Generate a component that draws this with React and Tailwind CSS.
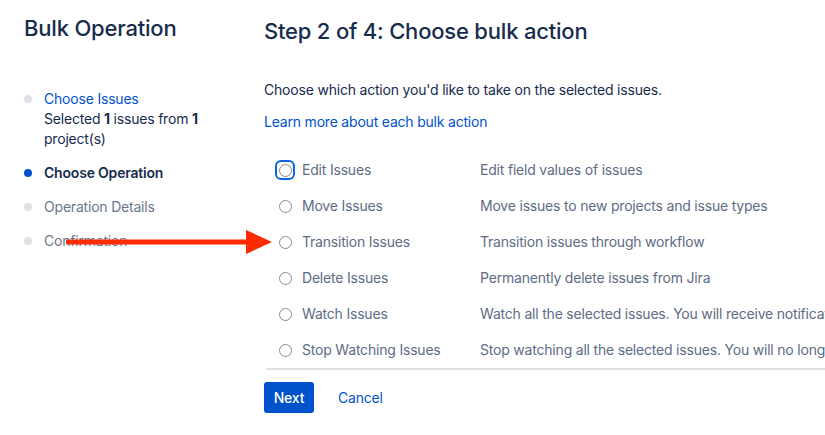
import React from 'react';

const steps = [
  { name: 'Choose Issues', state: 'done' },
  { name: 'Choose Operation', state: 'active' },
  { name: 'Operation Details', state: 'todo' },
  { name: 'Confirmation', state: 'todo' },
];

const ops = [
  ['Edit Issues', 'Edit field values of issues'],
  ['Move Issues', 'Move issues to new projects and issue types'],
  ['Transition Issues', 'Transition issues through workflow'],
  ['Delete Issues', 'Permanently delete issues from Jira'],
  ['Watch Issues', 'Watch all the selected issues. You will receive notifications when any of them are updated'],
  ['Stop Watching Issues', 'Stop watching all the selected issues. You will no longer receive notifications'],
];

const Radio = ({ focused }) => (
  <span
    className={
      'flex items-center justify-center w-[20px] h-[20px] rounded-[6px] ' +
      (focused ? 'border-2 border-[#0c66e4]' : 'border-2 border-transparent')
    }
  >
    <span className="block w-[13px] h-[13px] rounded-full border border-[#8a8a8a] bg-white" />
  </span>
);

const App = () => {
  return (
    <div
      className="relative w-[825px] h-[435px] overflow-hidden bg-white text-[#172B4D] tracking-[-0.2px]"
      style={{ fontFamily: 'Inter, "Noto Sans", sans-serif' }}
    >
      <div className="flex">
        {/* sidebar */}
        <div className="w-[264px] shrink-0 pl-6">
          <h2 className="pt-[13px] text-[22px] leading-[30px] font-medium">Bulk Operation</h2>
          <ul className="mt-[46px] text-[14px] leading-[20px]">
            {steps.map((s) => (
              <li key={s.name} className="flex mb-[14px]">
                <span
                  className={
                    'mt-[6px] w-[8px] h-[8px] rounded-full shrink-0 ' +
                    (s.state === 'active' ? 'bg-[#0052CC]' : 'bg-[#DFE1E6]')
                  }
                />
                <div className="ml-[12px]">
                  {s.state === 'done' && (
                    <>
                      <div className="h-[20px] text-[#0052CC]">{s.name}</div>
                      <div className="h-[20px] text-[#172B4D]">
                        Selected <b>1</b> issues from <b>1</b>
                      </div>
                      <div className="h-[20px] text-[#172B4D]">project(s)</div>
                    </>
                  )}
                  {s.state === 'active' && <div className="h-[20px] font-semibold">{s.name}</div>}
                  {s.state === 'todo' && <div className="h-[20px] text-[#6B778C]">{s.name}</div>}
                </div>
              </li>
            ))}
          </ul>
        </div>

        {/* main */}
        <div className="flex-1 min-w-0">
          <h1 className="pt-[16px] text-[22px] leading-[30px] font-medium whitespace-nowrap">
            Step 2 of 4: Choose bulk action
          </h1>
          <p className="mt-[34px] text-[14px] leading-[20px] whitespace-nowrap">
            Choose which action you'd like to take on the selected issues.
          </p>
          <a className="block mt-[12px] text-[14px] leading-[20px] text-[#0052CC]">
            Learn more about each bulk action
          </a>

          <div className="mt-[20px] w-[800px] text-[14px] leading-[20px] text-[#5E6C84] whitespace-nowrap">
            {ops.map(([label, desc], i) => (
              <div key={label} className="flex items-center h-[36px]">
                <div className="w-[216px] shrink-0 flex items-center pl-[11px]">
                  <Radio focused={i === 0} />
                  <span className="ml-[7px]">{label}</span>
                </div>
                <div>{desc}</div>
              </div>
            ))}
          </div>
          <div className="ml-[2px] h-[2px] bg-[#DFE1E6]" />

          <div className="flex items-center mt-[12px] text-[14px]">
            <button className="h-[31px] w-[50px] rounded-[3px] bg-[#0052CC] text-white font-medium">
              Next
            </button>
            <a className="ml-[24px] text-[#0052CC]">Cancel</a>
          </div>
        </div>
      </div>

      {/* annotation arrow */}
      <svg className="absolute left-[66px] top-[229px]" width="206" height="26" viewBox="0 0 206 26">
        <rect x="0" y="10.5" width="182" height="5" fill="#FF2A00" />
        <polygon points="180,1 206,13 180,25" fill="#FF2A00" />
      </svg>
    </div>
  );
};

export default App;
